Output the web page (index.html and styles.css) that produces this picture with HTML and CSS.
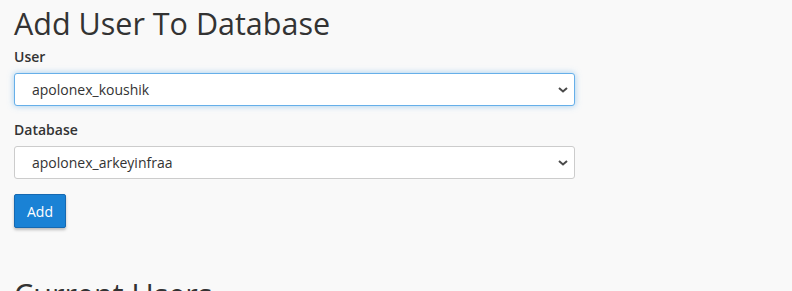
FILE: index.html
```html
<!DOCTYPE html>
<html>
<head>
  <title>Add User To Database</title>
  <link rel="stylesheet" href="styles.css">
</head>
<body>
  <div class="section">
    <h1>Add User To Database</h1>
    <form class="add-form">
      <div class="form-group">
        <label for="user">User</label>
        <div class="select-wrap">
          <select id="user" class="form-control focused">
            <option>apolonex_koushik</option>
          </select>
          <svg class="caret" width="10" height="6" viewBox="0 0 10 6"><path d="M1 1l4 3.5L9 1" fill="none" stroke="#4a4a4a" stroke-width="2"/></svg>
        </div>
      </div>
      <div class="form-group">
        <label for="db">Database</label>
        <div class="select-wrap">
          <select id="db" class="form-control">
            <option>apolonex_arkeyinfraa</option>
          </select>
          <svg class="caret" width="10" height="6" viewBox="0 0 10 6"><path d="M1 1l4 3.5L9 1" fill="none" stroke="#4a4a4a" stroke-width="2"/></svg>
        </div>
      </div>
      <button type="button" class="btn-primary">Add</button>
    </form>
  </div>
  <div class="section current">
    <h1>Current Users</h1>
  </div>
</body>
</html>
```

FILE: styles.css
```css
body {
  margin: 0;
  padding: 0 14px;
  background-color: #f9f9f9;
  font-family: "Open Sans", Arial, sans-serif;
  color: #333;
  overflow: hidden;
}
h1 {
  margin: 0;
  font-size: 30.5px;
  font-weight: 400;
  line-height: 46px;
  color: #333;
}
.add-form {
  width: 561px;
}
.form-group {
  margin-bottom: 15px;
}
.form-group:first-child {
  margin-top: 2px;
}
label {
  display: block;
  font-size: 14px;
  font-weight: 600;
  line-height: 18px;
  margin-bottom: 7px;
}
.select-wrap {
  position: relative;
}
.form-control {
  appearance: none;
  -webkit-appearance: none;
  display: block;
  width: 100%;
  height: 33px;
  padding: 0 30px 0 17px;
  font-family: "Open Sans", Arial, sans-serif;
  font-size: 14px;
  color: #333;
  background-color: #fff;
  border: 1px solid #ccc;
  border-radius: 3px;
  outline: none;
}
.form-control.focused {
  border-color: #66afe9;
  box-shadow: 0 0 6px rgba(102, 175, 233, 0.6);
}
.caret {
  position: absolute;
  right: 7px;
  top: 14px;
  pointer-events: none;
}
.btn-primary {
  height: 34px;
  padding: 0 12px;
  font-family: "Open Sans", Arial, sans-serif;
  font-size: 14px;
  color: #fff;
  background-color: #1a82d5;
  border: 1px solid #1669b1;
  border-radius: 2px;
  box-shadow: 0 2px 3px rgba(0, 0, 0, 0.25);
  cursor: pointer;
}
.current {
  margin-top: 43px;
}
```
